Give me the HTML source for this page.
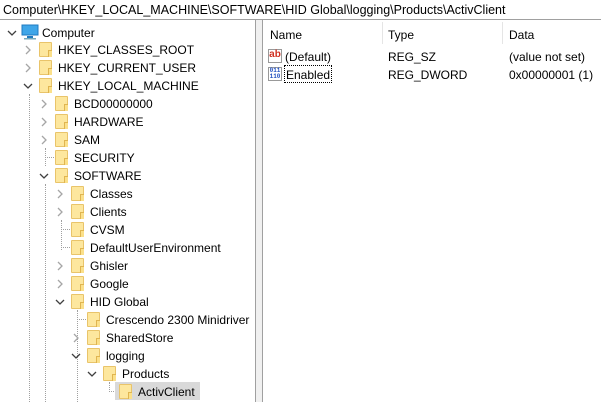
<html><head><style>
body{margin:0;width:601px;height:402px;background:#fff;font:12px "Liberation Sans",sans-serif;color:#000;position:relative;overflow:hidden}
.a{position:absolute}
.r{position:absolute;height:18px;line-height:20px;white-space:nowrap}
.f{position:absolute;width:13px;height:15px;background:#fde79e;border:1px solid #e9c46a;box-sizing:border-box;border-radius:1px}
.f:after{content:"";position:absolute;right:-1px;bottom:-1px;width:3px;height:6px;border-left:1px solid #e0b550;border-top:1px solid #e0b550;background:#fbe08a}
.dv{position:absolute;border-left:1px dotted #a0a0a0;width:0}
.dh{position:absolute;border-top:1px dotted #a0a0a0;height:0}
</style></head><body>
<div class="a" style="left:0;top:0;width:601px;height:20px;line-height:20px;border-bottom:1px solid #a0a0a0;padding-left:3px;box-sizing:border-box;font-size:12.5px">Computer\HKEY_LOCAL_MACHINE\SOFTWARE\HID Global\logging\Products\ActivClient</div>
<div class="a" style="left:255px;top:20px;width:1px;height:382px;background:#a0a0a0"></div>
<div class="a" style="left:256px;top:20px;width:6px;height:382px;background:#f0f0f0"></div>
<div class="a" style="left:262px;top:20px;width:1px;height:382px;background:#a0a0a0"></div>
<div class="dv" style="left:29px;top:94px;height:308px"></div>
<div class="dv" style="left:45px;top:148px;height:18px"></div>
<div class="dh" style="left:45px;top:157px;width:9px"></div>
<div class="dv" style="left:45px;top:184px;height:218px"></div>
<div class="dh" style="left:61px;top:229px;width:9px"></div>
<div class="dh" style="left:61px;top:247px;width:9px"></div>
<div class="dv" style="left:61px;top:220px;height:30px"></div>
<div class="dv" style="left:77px;top:310px;height:92px"></div>
<div class="dh" style="left:77px;top:319px;width:9px"></div>
<div class="dv" style="left:109px;top:382px;height:10px"></div>
<div class="dh" style="left:109px;top:391px;width:9px"></div>
<div class="a" style="left:115px;top:382px;width:85px;height:18px;background:#d9d9d9"></div>
<svg class="a" style="left:0;top:0" width="260" height="402" fill="none" stroke-width="1.3">
<g stroke="#404040"><path d="M8 31l4 4 4-4"/><path d="M24 84l4 4 4-4"/><path d="M40 174l4 4 4-4"/><path d="M56 300l4 4 4-4"/><path d="M72 354l4 4 4-4"/><path d="M88 372l4 4 4-4"/></g>
<g stroke="#a6a6a6"><path d="M26 46l4 4-4 4"/><path d="M26 64l4 4-4 4"/><path d="M42 100l4 4-4 4"/><path d="M42 118l4 4-4 4"/><path d="M42 136l4 4-4 4"/><path d="M58 190l4 4-4 4"/><path d="M58 208l4 4-4 4"/><path d="M58 262l4 4-4 4"/><path d="M58 280l4 4-4 4"/><path d="M74 334l4 4-4 4"/></g>
<rect x="22" y="25" width="16" height="10" fill="#3fa6e8" stroke="#1f7bc0" stroke-width="1"/><rect x="27" y="36" width="6" height="2" fill="#1f7bc0"/><rect x="24" y="38" width="12" height="1.5" fill="#7ab"/>
</svg>
<div class="r" style="left:42px;top:23px">Computer</div>
<div class="f" style="left:39px;top:42px"></div><div class="r" style="left:58px;top:40px">HKEY_CLASSES_ROOT</div>
<div class="f" style="left:39px;top:60px"></div><div class="r" style="left:58px;top:58px">HKEY_CURRENT_USER</div>
<div class="f" style="left:39px;top:78px"></div><div class="r" style="left:58px;top:76px">HKEY_LOCAL_MACHINE</div>
<div class="f" style="left:55px;top:96px"></div><div class="r" style="left:74px;top:94px">BCD00000000</div>
<div class="f" style="left:55px;top:114px"></div><div class="r" style="left:74px;top:112px">HARDWARE</div>
<div class="f" style="left:55px;top:132px"></div><div class="r" style="left:74px;top:130px">SAM</div>
<div class="f" style="left:55px;top:150px"></div><div class="r" style="left:74px;top:148px">SECURITY</div>
<div class="f" style="left:55px;top:168px"></div><div class="r" style="left:74px;top:166px">SOFTWARE</div>
<div class="f" style="left:71px;top:186px"></div><div class="r" style="left:90px;top:184px">Classes</div>
<div class="f" style="left:71px;top:204px"></div><div class="r" style="left:90px;top:202px">Clients</div>
<div class="f" style="left:71px;top:222px"></div><div class="r" style="left:90px;top:220px">CVSM</div>
<div class="f" style="left:71px;top:240px"></div><div class="r" style="left:90px;top:238px">DefaultUserEnvironment</div>
<div class="f" style="left:71px;top:258px"></div><div class="r" style="left:90px;top:256px">Ghisler</div>
<div class="f" style="left:71px;top:276px"></div><div class="r" style="left:90px;top:274px">Google</div>
<div class="f" style="left:71px;top:294px"></div><div class="r" style="left:90px;top:292px">HID Global</div>
<div class="f" style="left:87px;top:312px"></div><div class="r" style="left:106px;top:310px">Crescendo 2300 Minidriver</div>
<div class="f" style="left:87px;top:330px"></div><div class="r" style="left:106px;top:328px">SharedStore</div>
<div class="f" style="left:87px;top:348px"></div><div class="r" style="left:106px;top:346px">logging</div>
<div class="f" style="left:103px;top:366px"></div><div class="r" style="left:122px;top:364px">Products</div>
<div class="f" style="left:119px;top:384px"></div><div class="r" style="left:138px;top:382px">ActivClient</div>
<div class="a" style="left:382px;top:22px;width:1px;height:22px;background:#e5e5e5"></div>
<div class="a" style="left:502px;top:22px;width:1px;height:22px;background:#e5e5e5"></div>
<div class="r" style="left:270px;top:25px">Name</div>
<div class="r" style="left:388px;top:25px">Type</div>
<div class="r" style="left:509px;top:25px">Data</div>
<div class="a" style="left:268px;top:49px;width:14px;height:14px;border:1px solid #999;box-sizing:border-box;background:#fff;color:#d03020;font:bold 10px 'Liberation Sans';line-height:10px;text-align:center">ab</div>
<div class="r" style="left:285px;top:47px">(Default)</div>
<div class="r" style="left:388px;top:47px">REG_SZ</div>
<div class="r" style="left:509px;top:47px">(value not set)</div>
<div class="a" style="left:268px;top:67px;width:14px;height:14px;border:1px solid #999;box-sizing:border-box;background:#fff;color:#2050c0;font:bold 6px 'Liberation Mono';line-height:6px;text-align:center">011<br>110</div>
<div class="r" style="left:284px;top:65px;height:16px;line-height:18px;border:1px dotted #000;padding:0 1px">Enabled</div>
<div class="r" style="left:388px;top:65px">REG_DWORD</div>
<div class="r" style="left:509px;top:65px">0x00000001 (1)</div>
</body></html>
